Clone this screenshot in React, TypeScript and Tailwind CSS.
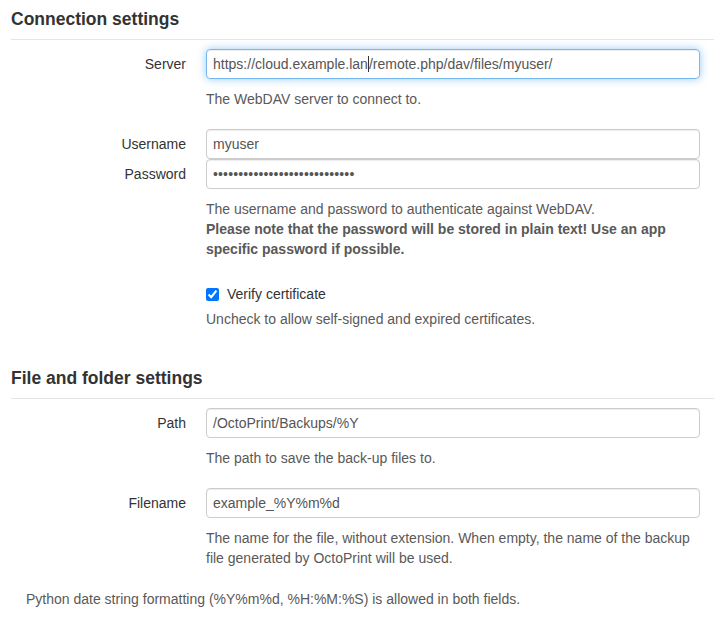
import type { ReactNode } from 'react';

const inputBase =
    'h-[30px] flex items-center px-[6px] border rounded-[4px] text-[#555] whitespace-nowrap overflow-hidden';
const inputIdle = 'border-[#ccc] shadow-[inset_0_1px_1px_rgba(0,0,0,0.075)]';
const inputFocus =
    'border-[rgba(82,168,236,0.8)] shadow-[inset_0_1px_1px_rgba(0,0,0,0.075),0_0_8px_rgba(82,168,236,0.6)]';

function Legend({ children }: { children: ReactNode }) {
    return (
        <div className="h-[40px] leading-[39px] border-b border-[#e5e5e5] text-[17.5px] font-bold text-[#333]">
            {children}
        </div>
    );
}

function Row({ label, children }: { label?: string; children: ReactNode }) {
    return (
        <div className="flex">
            <div className="w-[160px] shrink-0 text-right pt-[5px] text-[#333]">{label}</div>
            <div className="ml-[20px] flex-1 min-w-0">{children}</div>
        </div>
    );
}

function Help({ children }: { children: ReactNode }) {
    return <div className="text-[#595959]">{children}</div>;
}

export default function App() {
    return (
        <div className="w-[728px] h-[635px] bg-white pl-[11px] pr-[14px] text-[14px] leading-[20px] text-[#333] font-['Liberation_Sans',Arial,sans-serif]">
            <Legend>Connection settings</Legend>
            <div className="pl-[15px] pr-[14px]">
                <div className="mt-[9px]">
                    <Row label="Server">
                        <div className={`${inputBase} ${inputFocus}`}>
                            <span>https://cloud.example.lan</span>
                            <span className="inline-block w-px h-[16px] bg-[#333]" />
                            <span>/remote.php/dav/files/myuser/</span>
                        </div>
                        <div className="mt-[10px]">
                            <Help>The WebDAV server to connect to.</Help>
                        </div>
                    </Row>
                </div>

                <div className="mt-[20px]">
                    <Row label="Username">
                        <div className={`${inputBase} ${inputIdle}`}>myuser</div>
                    </Row>
                    <Row label="Password">
                        <div className={`${inputBase} ${inputIdle} tracking-[0.15px]`}>
                            {'•'.repeat(28)}
                        </div>
                        <div className="mt-[10px]">
                            <Help>
                                The username and password to authenticate against WebDAV.
                                <br />
                                <b>
                                    Please note that the password will be stored in plain text! Use an app
                                    specific password if possible.
                                </b>
                            </Help>
                        </div>
                    </Row>
                </div>

                <div className="mt-[20px]">
                    <Row>
                        <label className="flex items-center gap-[8px] pt-[5px] text-[#333]">
                            <input type="checkbox" defaultChecked className="m-0 w-[13px] h-[13px]" />
                            Verify certificate
                        </label>
                        <div className="mt-[5px]">
                            <Help>Uncheck to allow self-signed and expired certificates.</Help>
                        </div>
                    </Row>
                </div>
            </div>

            <div className="mt-[30px]">
                <Legend>File and folder settings</Legend>
            </div>
            <div className="pl-[15px] pr-[14px]">
                <div className="mt-[9px]">
                    <Row label="Path">
                        <div className={`${inputBase} ${inputIdle}`}>/OctoPrint/Backups/%Y</div>
                        <div className="mt-[10px]">
                            <Help>The path to save the back-up files to.</Help>
                        </div>
                    </Row>
                </div>
                <div className="mt-[20px]">
                    <Row label="Filename">
                        <div className={`${inputBase} ${inputIdle}`}>example_%Y%m%d</div>
                        <div className="mt-[10px]">
                            <Help>
                                The name for the file, without extension. When empty, the name of the backup
                                file generated by OctoPrint will be used.
                            </Help>
                        </div>
                    </Row>
                </div>
                <div className="mt-[21px]">
                    <Help>Python date string formatting (%Y%m%d, %H:%M:%S) is allowed in both fields.</Help>
                </div>
            </div>
        </div>
    );
}
